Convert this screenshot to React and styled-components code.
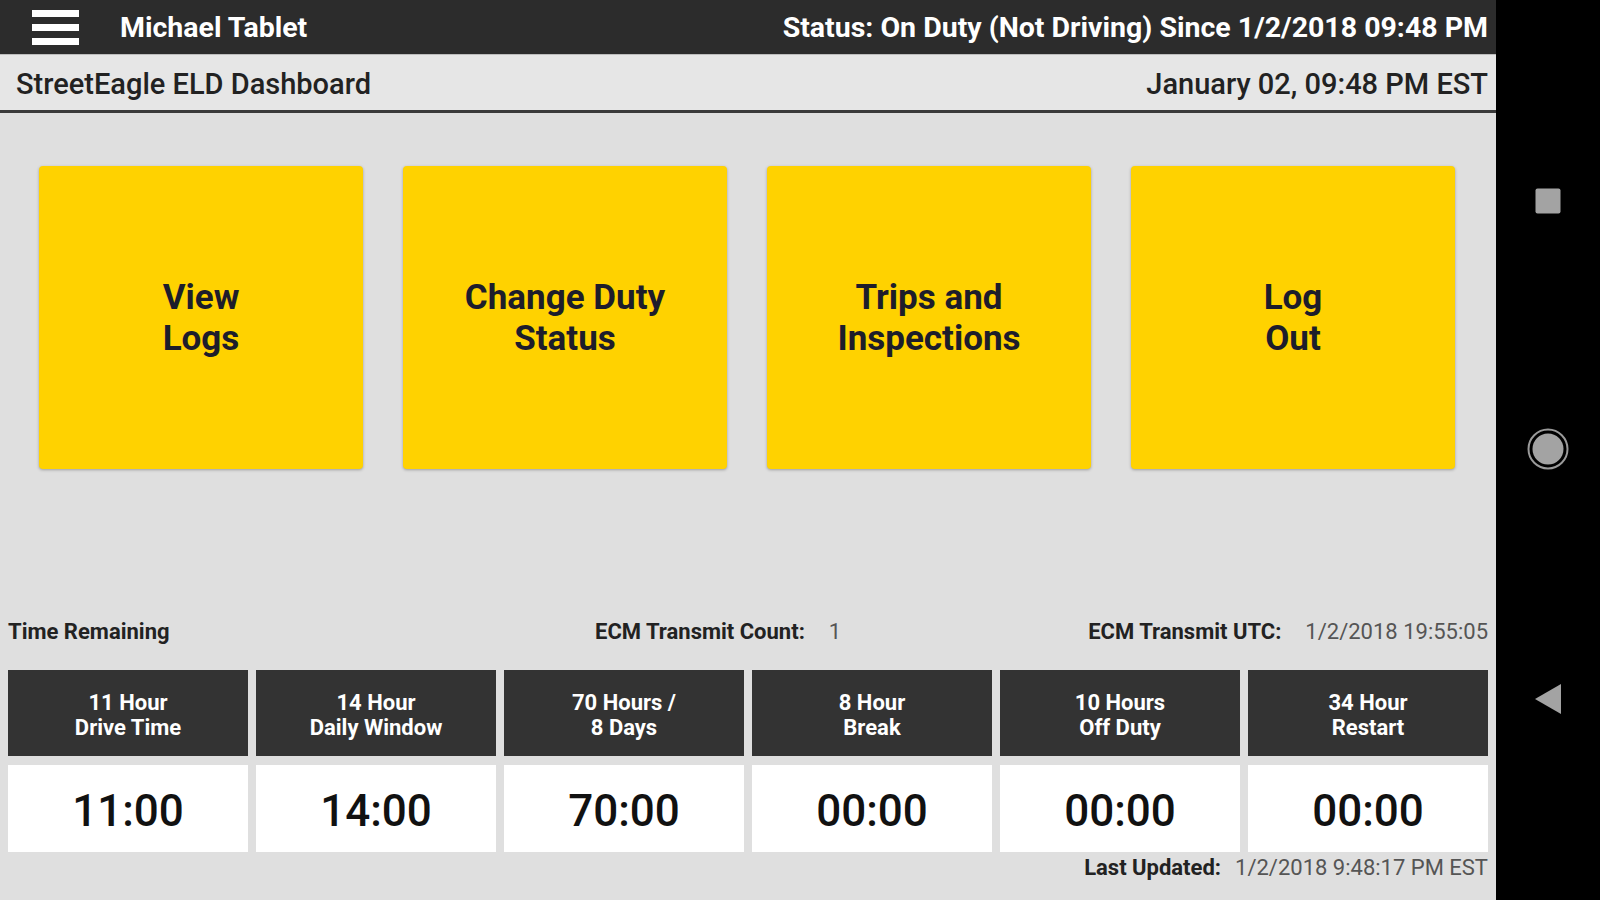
import styled, { createGlobalStyle } from "styled-components";

const GlobalStyle = createGlobalStyle`
  html, body {
    margin: 0;
    padding: 0;
    background: #000;
  }
  * {
    box-sizing: border-box;
  }
  body {
    font-family: Roboto, "Liberation Sans", Arial, sans-serif;
  }
`;

const tiles = [
  ["View", "Logs"],
  ["Change Duty", "Status"],
  ["Trips and", "Inspections"],
  ["Log", "Out"],
];

const timers = [
  { title: ["11 Hour", "Drive Time"], value: "11:00" },
  { title: ["14 Hour", "Daily Window"], value: "14:00" },
  { title: ["70 Hours /", "8 Days"], value: "70:00" },
  { title: ["8 Hour", "Break"], value: "00:00" },
  { title: ["10 Hours", "Off Duty"], value: "00:00" },
  { title: ["34 Hour", "Restart"], value: "00:00" },
];

export default function App() {
  return (
    <>
      <GlobalStyle />
      <Screen>
        <AppColumn>
          <TopBar>
            <Menu>
              <MenuBar />
              <MenuBar />
              <MenuBar />
            </Menu>
            <DeviceName>Michael Tablet</DeviceName>
            <Status>Status: On Duty (Not Driving) Since 1/2/2018 09:48 PM</Status>
          </TopBar>

          <SubHeader>
            <span>StreetEagle ELD Dashboard</span>
            <span>January 02, 09:48 PM EST</span>
          </SubHeader>

          <Main>
            <TileGrid>
              {tiles.map((lines) => (
                <Tile key={lines.join(" ")}>
                  {lines[0]}
                  <br />
                  {lines[1]}
                </Tile>
              ))}
            </TileGrid>

            <Stats>
              <InfoRow>
                <Label>Time Remaining</Label>
                <Pair>
                  <Label>ECM Transmit Count:</Label>
                  <Value>1</Value>
                </Pair>
                <Pair>
                  <Label>ECM Transmit UTC:</Label>
                  <Value>1/2/2018 19:55:05</Value>
                </Pair>
              </InfoRow>

              <TimerGrid>
                {timers.map((t) => (
                  <HeadCell key={t.title.join()}>
                    {t.title[0]}
                    <br />
                    {t.title[1]}
                  </HeadCell>
                ))}
                {timers.map((t) => (
                  <ValueCell key={t.title.join() + "v"}>{t.value}</ValueCell>
                ))}
              </TimerGrid>

              <Updated>
                <Label>Last Updated:</Label>
                <Value>1/2/2018 9:48:17 PM EST</Value>
              </Updated>
            </Stats>
          </Main>
        </AppColumn>

        <NavBar>
          <svg width="26" height="26" viewBox="0 0 26 26">
            <rect x="0.5" y="0.5" width="25" height="25" rx="2" fill="#a3a3a3" />
          </svg>
          <svg width="44" height="44" viewBox="0 0 44 44">
            <circle cx="22" cy="22" r="19.5" fill="none" stroke="#9a9a9a" strokeWidth="2" />
            <circle cx="22" cy="22" r="15.5" fill="#a3a3a3" />
          </svg>
          <svg width="28" height="32" viewBox="0 0 28 32">
            <polygon points="1,16 27,1 27,31" fill="#a3a3a3" />
          </svg>
        </NavBar>
      </Screen>
    </>
  );
}

/* ── styled ── */
const Screen = styled.div`
  display: flex;
  width: 1600px;
  height: 900px;
  overflow: hidden;
`;

const AppColumn = styled.div`
  flex: 1;
  display: flex;
  flex-direction: column;
  background: #dfdfdf;
`;

const TopBar = styled.header`
  height: 55px;
  display: flex;
  align-items: center;
  padding: 0 8px 0 32px;
  background: #2c2c2c;
  color: #fff;
  border-bottom: 1px solid #bdbdbd;
`;

const Menu = styled.div`
  display: flex;
  flex-direction: column;
  gap: 7px;
  width: 47px;
`;

const MenuBar = styled.span`
  display: block;
  height: 7px;
  background: #fff;
`;

const DeviceName = styled.div`
  margin-left: 41px;
  font-size: 28.5px;
  font-weight: 700;
`;

const Status = styled.div`
  margin-left: auto;
  font-size: 28.5px;
  font-weight: 700;
`;

const SubHeader = styled.div`
  height: 58px;
  display: flex;
  align-items: center;
  justify-content: space-between;
  padding: 2px 8px 0 16px;
  background: #e6e6e6;
  border-bottom: 3px solid #3a3a3a;
  color: #222;
  font-size: 29px;
  font-weight: 500;
`;

const Main = styled.main`
  flex: 1;
  display: flex;
  flex-direction: column;
`;

const TileGrid = styled.div`
  display: grid;
  grid-template-columns: repeat(4, 1fr);
  gap: 40px;
  padding: 53px 41px 0 39px;
`;

const Tile = styled.button`
  height: 303px;
  display: flex;
  align-items: center;
  justify-content: center;
  text-align: center;
  background: #ffd200;
  border: none;
  border-radius: 4px;
  box-shadow: 0 1px 3px rgba(0, 0, 0, 0.3);
  color: #1d1d2b;
  font-family: inherit;
  font-size: 35px;
  font-weight: 700;
  line-height: 41px;
  cursor: pointer;
`;

const Stats = styled.section`
  margin-top: auto;
  padding: 0 8px 22px;
`;

const InfoRow = styled.div`
  display: grid;
  grid-template-columns: 587px 1fr auto;
  align-items: center;
  height: 24px;
`;

const Pair = styled.div`
  display: flex;
  gap: 24px;
`;

const Label = styled.span`
  font-size: 22px;
  font-weight: 700;
  color: #222;
`;

const Value = styled.span`
  font-size: 22px;
  color: #555;
`;

const TimerGrid = styled.div`
  margin-top: 27px;
  display: grid;
  grid-template-columns: repeat(6, 1fr);
  column-gap: 8px;
  row-gap: 9px;
`;

const HeadCell = styled.div`
  height: 86px;
  display: flex;
  align-items: center;
  justify-content: center;
  padding-top: 3px;
  text-align: center;
  background: #333;
  color: #fff;
  font-size: 22px;
  font-weight: 700;
  line-height: 25px;
`;

const ValueCell = styled.div`
  height: 87px;
  display: flex;
  align-items: center;
  justify-content: center;
  padding-top: 4px;
  background: #fff;
  color: #111;
  font-size: 44px;
  font-weight: 500;
`;

const Updated = styled.div`
  margin-top: 4px;
  height: 22px;
  display: flex;
  align-items: center;
  justify-content: flex-end;
  gap: 14px;
`;

const NavBar = styled.nav`
  width: 104px;
  display: flex;
  flex-direction: column;
  align-items: center;
  justify-content: space-between;
  padding: 188px 0 185px;
  background: #000;
`;
